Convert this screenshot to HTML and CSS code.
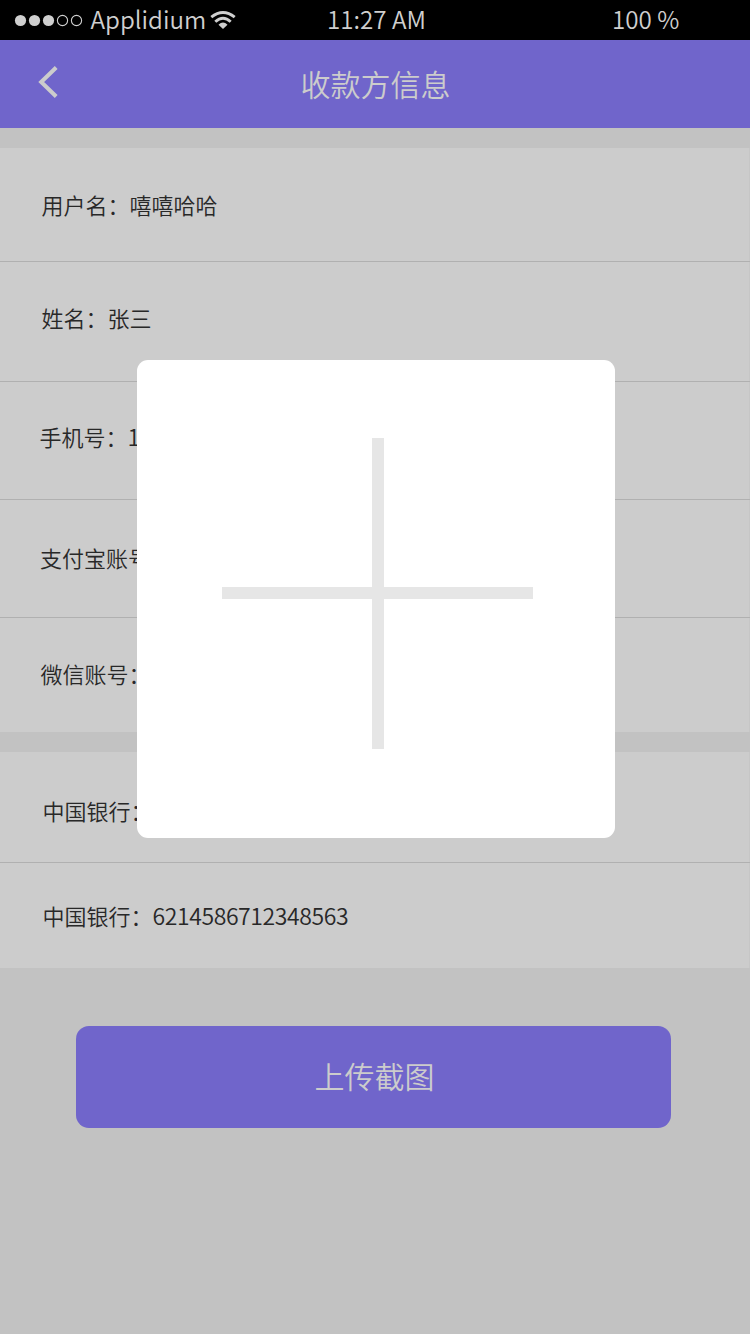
FILE: index.html
```html
<!DOCTYPE html>
<html lang="zh-CN">
<head>
<meta charset="utf-8">
<title>收款方信息</title>
<link rel="stylesheet" href="styles.css">
</head>
<body>
<div class="screen">
  <div class="status">
    <div class="carrier">
      <svg class="signal" width="70" height="14" viewBox="0 0 70 14">
        <g fill="#cfcfcf"><circle cx="6.5" cy="7.5" r="5.6"/><circle cx="20.5" cy="7.5" r="5.6"/><circle cx="34.5" cy="7.5" r="5.6"/></g>
        <g fill="none" stroke="#cfcfcf" stroke-width="1.1"><circle cx="48.5" cy="7.5" r="5.1"/><circle cx="62.5" cy="7.5" r="5.1"/></g>
      </svg>
      <span class="carrier-name">Applidium</span>
      <svg class="wifi" width="26" height="20" viewBox="0 0 26 20">
        <g fill="none" stroke="#cfcfcf" stroke-width="2.9"><path d="M1.3 7.2Q13 -2.2 24.7 7.2"/><path d="M5.3 11.7Q13 4.6 20.7 11.7"/></g>
        <path fill="#cfcfcf" d="M8.5 14.8Q13 10.4 17.5 14.8L13 19Z"/>
      </svg>
    </div>
    <span class="time">11:27 AM</span>
    <span class="battery">100 %</span>
  </div>
  <header class="nav">
    <svg class="back" width="20" height="32" viewBox="0 0 20 32"><path d="M18.2 1.5 3.2 16l15 14.5" fill="none" stroke="#cccccc" stroke-width="4"/></svg>
    <h1 class="title">收款方信息</h1>
  </header>
  <section class="panel">
    <div class="row user">用户名：嘻嘻哈哈</div>
    <div class="row name">姓名：张三</div>
    <div class="row phone">手机号：<span class="digits">1</span></div>
    <div class="row alipay">支付宝账号：</div>
    <div class="row wechat">微信账号：</div>
  </section>
  <section class="panel">
    <div class="row bank-name">中国银行：</div>
    <div class="row bank-card">中国银行：<span class="digits">6214586712348563</span></div>
  </section>
  <button class="upload">上传截图</button>
  <div class="dialog">
    <svg width="478" height="478" viewBox="0 0 478 478"><path fill="#e6e6e6" d="M235 78h12v149h149v12H247v150h-12V239H85v-12h150z"/></svg>
  </div>
</div>
</body>
</html>
```

FILE: styles.css
```css
body {
  margin: 0;
  background: #c2c2c2;
  font-family: "Noto Sans CJK SC", sans-serif;
}

.screen {
  position: relative;
  height: 1334px;
  overflow: hidden;
  background: #c2c2c2;
}

.status {
  display: grid;
  grid-template-columns: 327px 285px 1fr;
  height: 40px;
  background: #000;
  color: #cfcfcf;
  font-size: 24.2px;
  font-weight: 350;
  line-height: 38px;
  white-space: nowrap;
}

.carrier {
  display: flex;
  align-items: center;
  height: 40px;
  padding-left: 14px;
}

.carrier-name {
  width: 115.5px;
  height: 40px;
  margin-left: 6.5px;
}

.wifi {
  margin-left: 3.5px;
}

.nav {
  display: grid;
  grid-template-columns: 76px 1fr 76px;
  align-items: center;
  height: 88px;
  background: #7065cb;
}

.back {
  margin: 0 0 5px 38px;
}

.title {
  margin: 0 0 2px 1px;
  color: #cccccc;
  font-size: 30px;
  font-weight: 350;
  line-height: 44px;
  text-align: center;
}

.panel {
  width: 749px;
  margin-top: 20px;
  background: #cccccc;
  border-right: 1px solid #c6c6c6;
}

.row {
  box-sizing: border-box;
  width: 750px;
  border-bottom: 1px solid #b0b0b0;
  color: #282828;
  font-size: 22px;
  font-weight: 350;
  line-height: 32px;
  white-space: nowrap;
}

.row:last-child {
  width: auto;
  border-bottom: 0;
}

.digits {
  font-size: 23px;
  letter-spacing: -0.4px;
}

.user { height: 114px; padding: 40px 0 0 41.5px; }
.name { height: 120px; padding: 39px 0 0 41.5px; }
.phone { height: 118px; padding: 38px 0 0 39.5px; }
.alipay { height: 118px; padding: 41px 0 0 40px; }
.wechat { height: 114px; padding: 39px 0 0 40.5px; }
.bank-name { height: 111px; padding: 42px 0 0 42.5px; }
.bank-card { height: 105px; padding: 36px 0 0 42.5px; }

.upload {
  display: block;
  width: 595px;
  height: 102px;
  margin: 58px 0 0 76px;
  padding: 0 0 4px 2px;
  border: 0;
  border-radius: 13px;
  background: #7065cb;
  color: #cccccc;
  font: 350 30px/44px "Noto Sans CJK SC", sans-serif;
}

.dialog {
  position: absolute;
  top: 360px;
  left: 137px;
  width: 478px;
  height: 478px;
  border-radius: 11px;
  background: #fff;
}

.dialog svg {
  display: block;
}
```
